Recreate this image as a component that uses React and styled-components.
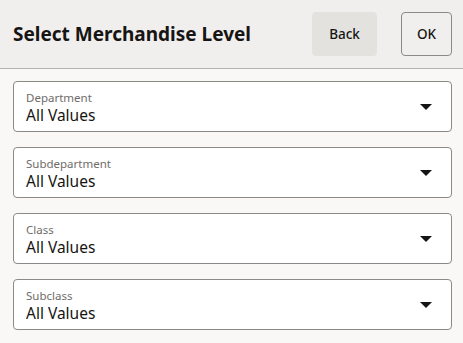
import React from "react";
import styled, { createGlobalStyle } from "styled-components";

const Global = createGlobalStyle`
  html, body {
    margin: 0;
    padding: 0;
    background: #f9f8f6;
    font-family: "Noto Sans", "Open Sans", sans-serif;
  }
`;

const levels = ["Department", "Subdepartment", "Class", "Subclass"];

const App = () => {
  return (
    <>
      <Global />
      <Wrapper>
        <Header>
          <Title>Select Merchandise Level</Title>
          <Actions>
            <Button>Back</Button>
            <Button outlined>OK</Button>
          </Actions>
        </Header>
        <Fields>
          {levels.map((name) => (
            <Field key={name}>
              <FieldText>
                <Label>{name}</Label>
                <Value>All Values</Value>
              </FieldText>
              <Caret viewBox="0 0 12 6" aria-hidden="true">
                <path d="M0 0 L12 0 L6 6 Z" />
              </Caret>
            </Field>
          ))}
        </Fields>
      </Wrapper>
    </>
  );
};

const Wrapper = styled.div`
  width: 463px;
  min-height: 343px;
  background: #f9f8f6;
`;

const Header = styled.header`
  height: 69px;
  box-sizing: border-box;
  display: flex;
  align-items: center;
  justify-content: space-between;
  padding: 0 11px 0 13px;
  background: #f1efed;
  border-bottom: 1px solid #b5b3b0;
`;

const Title = styled.h1`
  margin: 0 0 0 0;
  font-size: 19px;
  font-weight: 700;
  color: #161513;
  letter-spacing: 0;
`;

const Actions = styled.div`
  display: flex;
  gap: 24px;
`;

const Button = styled.button`
  height: 44px;
  box-sizing: border-box;
  padding: 0 ${({ outlined }) => (outlined ? "15px" : "16px")};
  border-radius: 4px;
  font-family: inherit;
  font-size: 13.5px;
  font-weight: 500;
  color: #161513;
  background: ${({ outlined }) => (outlined ? "transparent" : "#e4e2df")};
  border: 1px solid ${({ outlined }) => (outlined ? "#8c8a87" : "transparent")};
  cursor: pointer;
`;

const Fields = styled.div`
  display: flex;
  flex-direction: column;
  gap: 15px;
  padding: 12px 11px 12px 13px;
`;

const Field = styled.div`
  height: 51px;
  box-sizing: border-box;
  display: flex;
  align-items: center;
  justify-content: space-between;
  padding: 0 19px 0 12px;
  background: #ffffff;
  border: 1px solid #8c8a87;
  border-radius: 4px;
`;

const FieldText = styled.div`
  display: flex;
  flex-direction: column;
  padding-top: 1px;
`;

const Label = styled.span`
  font-size: 11.5px;
  line-height: 15px;
  color: #6f6c69;
`;

const Value = styled.span`
  font-size: 15.5px;
  line-height: 20px;
  color: #161513;
`;

const Caret = styled.svg`
  width: 12px;
  height: 6px;
  fill: #161513;
`;

export default App;
